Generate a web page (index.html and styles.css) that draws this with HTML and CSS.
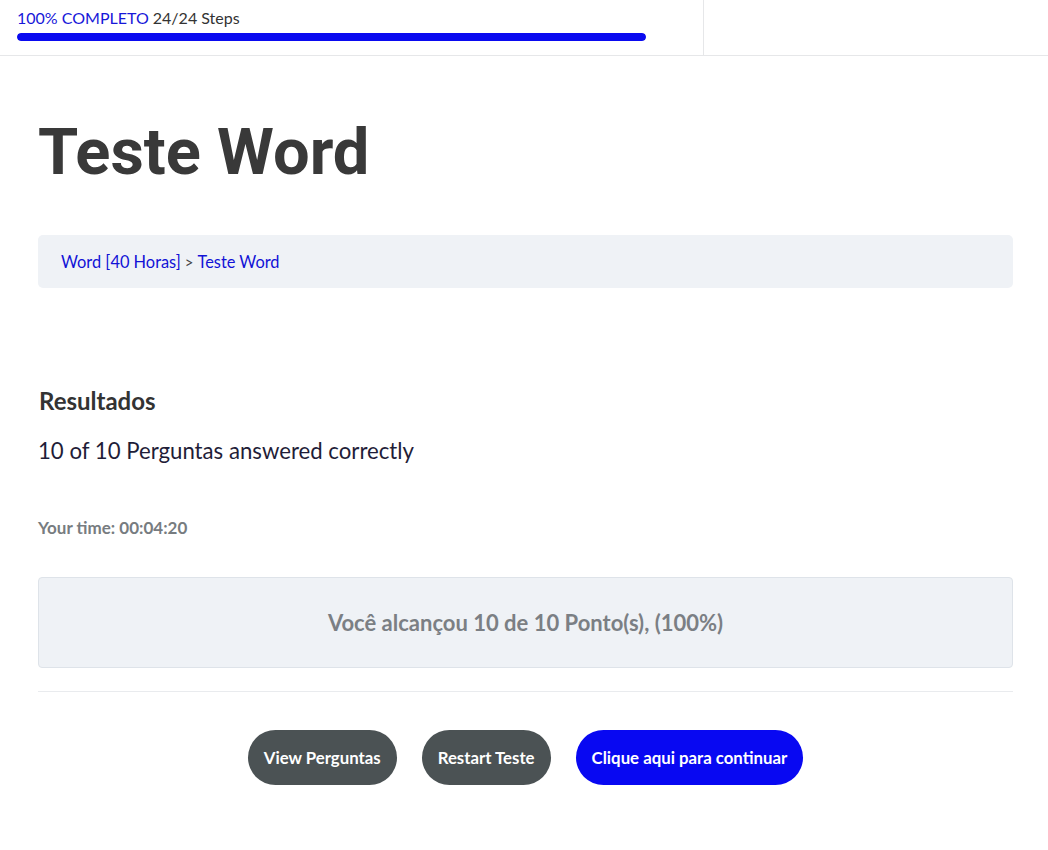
FILE: index.html
```html
<!DOCTYPE html>
<html lang="pt">
<head>
<meta charset="utf-8">
<title>Teste Word</title>
<link rel="stylesheet" href="styles.css">
</head>
<body>
<header class="topbar">
  <div class="progress-area">
    <div class="progress-label"><span class="pct">100% COMPLETO</span> <span class="steps">24/24 Steps</span></div>
    <div class="bar"><div class="bar-fill" style="width:100%"></div></div>
  </div>
  <div class="top-right"></div>
</header>
<main class="content">
  <h1 class="title">Teste Word</h1>
  <nav class="breadcrumb"><a href="#">Word [40 Horas]</a> <span class="sep">&gt;</span> <a href="#">Teste Word</a></nav>
  <h3 class="results-title">Resultados</h3>
  <p class="answered">10 of 10 Perguntas answered correctly</p>
  <p class="time">Your time: 00:04:20</p>
  <div class="score-box">Você alcançou 10 de 10 Ponto(s), (100%)</div>
  <hr class="divider">
  <div class="actions">
    <button class="btn btn-gray">View Perguntas</button>
    <button class="btn btn-gray">Restart Teste</button>
    <button class="btn btn-blue">Clique aqui para continuar</button>
  </div>
</main>
</body>
</html>
```
FILE: styles.css
```css
* { box-sizing: border-box; }
html, body { margin: 0; padding: 0; background: #fff; }
body { font-family: Lato, "Noto Sans", sans-serif; color: #333; }

.topbar {
  display: flex;
  height: 56px;
  border-bottom: 1px solid #e6e7e9;
}
.progress-area {
  width: 704px;
  border-right: 1px solid #e6e7e9;
  padding: 8px 0 0 17px;
}
.progress-label { font-size: 16px; line-height: 20px; }
.pct { color: #1717d9; }
.steps { color: #333; }
.bar {
  margin-top: 5px;
  width: 629px;
  height: 8px;
  border-radius: 4px;
  background: #e6e7e9;
  overflow: hidden;
}
.bar-fill { height: 100%; background: #0a0af0; border-radius: 4px; }
.top-right { flex: 1; }

.content { padding: 0 35px 0 38px; }
.title {
  font-family: Roboto, "Liberation Sans", sans-serif;
  font-weight: 700;
  font-size: 65px;
  line-height: 84px;
  color: #393939;
  margin: 0;
  padding-top: 54px;
}

.breadcrumb {
  margin-top: 41px;
  height: 53px;
  background: #eff2f6;
  border-radius: 5px;
  padding: 0 23px;
  display: flex;
  align-items: center;
  font-size: 16.4px;
  gap: 4px;
}
.breadcrumb a { color: #1212d6; text-decoration: none; }
.breadcrumb .sep { color: #444; font-size: 15px; }

.results-title {
  margin: 98px 0 0 1px;
  font-size: 24px;
  line-height: 30px;
  font-weight: 700;
  color: #333;
}
.answered {
  margin: 22px 0 0 0;
  font-size: 22.2px;
  line-height: 26px;
  color: #1f1d38;
}
.time {
  margin: 53px 0 0 0;
  font-size: 17px;
  line-height: 22px;
  font-weight: 700;
  color: #777c80;
}
.score-box {
  margin-top: 38px;
  height: 91px;
  background: #eff2f6;
  border: 1px solid #dee3e9;
  border-radius: 4px;
  display: flex;
  align-items: center;
  justify-content: center;
  font-size: 22px;
  font-weight: 700;
  color: #7b7f84;
}
.divider {
  margin: 23px 0 0 0;
  border: 0;
  border-top: 1px solid #e9ebee;
}
.actions {
  margin-top: 38px;
  display: flex;
  justify-content: center;
  gap: 25px;
}
.btn {
  height: 55px;
  border: 0;
  border-radius: 28px;
  padding: 0 16px;
  font-family: Lato, "Noto Sans", sans-serif;
  font-size: 16.8px;
  font-weight: 700;
  color: #fff;
  cursor: pointer;
}
.btn-gray { background: #4b5254; }
.btn-blue { background: #0808f2; }
```
